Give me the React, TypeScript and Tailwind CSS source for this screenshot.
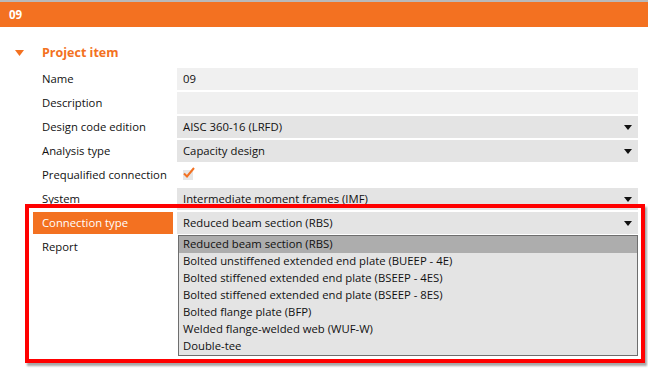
const ORANGE = "#f37121";

function Arrow() {
  return (
    <svg width="8" height="5" viewBox="0 0 8 5" className="shrink-0">
      <path d="M0 0h8L4 5z" fill="#111" />
    </svg>
  );
}

function Row({
  label,
  children,
  active = false,
}: {
  label: string;
  children?: React.ReactNode;
  active?: boolean;
}) {
  return (
    <div className="mb-[2px] flex h-[22px] items-center">
      <div
        className={`ml-[33px] flex h-full w-[140px] items-center whitespace-nowrap pl-[9px] ${
          active ? "bg-[#f37121] text-white" : "text-[#111]"
        }`}
      >
        {label}
      </div>
      <div className="ml-[4px] h-full w-[461px]">{children}</div>
    </div>
  );
}

function TextBox({ value = "" }: { value?: string }) {
  return (
    <div className="flex h-full items-center bg-[#f0f0f0] pl-[6px] text-[#111]">{value}</div>
  );
}

function Select({ value }: { value: string }) {
  return (
    <div className="flex h-full items-center justify-between bg-[#e4e4e4] pl-[6px] pr-[6px] text-[#111]">
      <span className="whitespace-nowrap">{value}</span>
      <Arrow />
    </div>
  );
}

const options = [
  "Reduced beam section (RBS)",
  "Bolted unstiffened extended end plate (BUEEP - 4E)",
  "Bolted stiffened extended end plate (BSEEP - 4ES)",
  "Bolted stiffened extended end plate (BSEEP - 8ES)",
  "Bolted flange plate (BFP)",
  "Welded flange-welded web (WUF-W)",
  "Double-tee",
];

export default function App() {
  return (
    <div
      className="relative h-[374px] w-[648px] overflow-hidden bg-white text-[11.3px]"
      style={{ fontFamily: '"Open Sans", "Noto Sans", sans-serif' }}
    >
      <div className="h-[2px] bg-[#b9b9b9]" />
      <div className="flex h-[25px] items-center bg-[#f37121] pl-[9px] text-[11.5px] font-bold text-white">
        09
      </div>

      <div className="mt-[17px] flex h-[18px] items-center">
        <svg width="9" height="6" viewBox="0 0 9 6" className="ml-[15px]">
          <path d="M0 0h9L4.5 6z" fill={ORANGE} />
        </svg>
        <span className="ml-[18px] text-[12.5px] font-bold text-[#f37121]">Project item</span>
      </div>

      <div className="mt-[6px]">
        <Row label="Name">
          <TextBox value="09" />
        </Row>
        <Row label="Description">
          <TextBox />
        </Row>
        <Row label="Design code edition">
          <Select value="AISC 360-16 (LRFD)" />
        </Row>
        <Row label="Analysis type">
          <Select value="Capacity design" />
        </Row>
        <Row label="Prequalified connection">
          <div className="flex h-full items-center pl-[6px]">
            <div className="relative h-[10px] w-[10px] bg-[#e6e6e6]">
              <svg width="12" height="11" viewBox="0 0 12 11" className="absolute -top-[3px] left-[0px]">
                <path d="M1 6.5l3 3L11 1" fill="none" stroke={ORANGE} strokeWidth="2" />
              </svg>
            </div>
          </div>
        </Row>
        <Row label="System">
          <Select value="Intermediate moment frames (IMF)" />
        </Row>
        <Row label="Connection type" active>
          <Select value="Reduced beam section (RBS)" />
        </Row>
        <div className="relative">
          <Row label="Report" />
          <div className="absolute left-[178px] top-[-1px] w-[460px] border border-[#6e6e6e] bg-[#e4e4e4]">
            {options.map((o, i) => (
              <div
                key={o}
                className={`flex h-[17px] items-center whitespace-nowrap pl-[4px] text-[#111] ${
                  i === 0 ? "bg-[#adadad]" : ""
                }`}
              >
                {o}
              </div>
            ))}
          </div>
        </div>
      </div>

      <div className="pointer-events-none absolute left-[25px] top-[204px] h-[159px] w-[620px] border-[4px] border-[#ff0000] shadow-[2px_3px_2px_rgba(0,0,0,0.35)]" />
    </div>
  );
}
